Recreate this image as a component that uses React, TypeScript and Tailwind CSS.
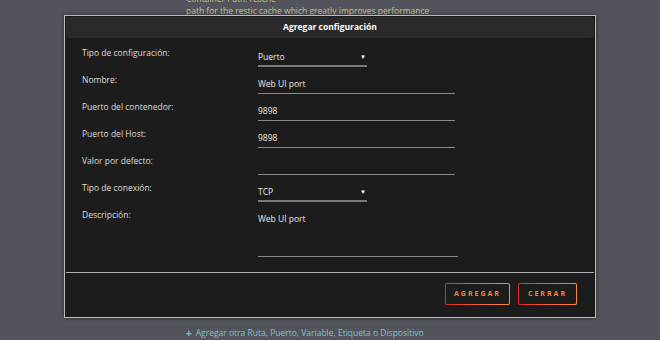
import React from 'react';

const font = { fontFamily: '"Open Sans", "Liberation Sans", Arial, sans-serif' };

const Label: React.FC<{ text: string }> = ({ text }) => (
  <div className="w-[176px] shrink-0 leading-[12px] text-[#dcdcdc]">{text}</div>
);

const TextInput: React.FC<{ value?: string; wide?: boolean }> = ({ value, wide }) => (
  <div
    className={`${wide ? 'w-[200px]' : 'w-[197px]'} pt-[4px] pb-[2px] h-[20px] leading-[12px] text-[#e8e8e8] border-b border-[#8a8a8a]`}
  >
    {value}
  </div>
);

const Select: React.FC<{ value: string }> = ({ value }) => (
  <div className="w-[109px] pt-[4px] pb-[2px] h-[20px] leading-[12px] text-[#e8e8e8] border-b-2 border-[#7a7a7a] flex justify-between pr-[1px]">
    <span>{value}</span>
    <span className="text-[6px] leading-[12px] text-white">▼</span>
  </div>
);

const Row: React.FC<{ label: string; children: React.ReactNode }> = ({ label, children }) => (
  <div className="flex h-[27px]">
    <Label text={label} />
    <div>{children}</div>
  </div>
);

const GradientButton: React.FC<{ text: string; width: string }> = ({ text, width }) => (
  <div className={`${width} h-[22px] p-[1px] rounded-[2px] bg-gradient-to-r from-[#e2262b] to-[#ff8c2f]`}>
    <div className="w-full h-full bg-[#1c1c1c] rounded-[1px] flex items-center justify-center text-[7px] font-bold tracking-[2px] text-[#f5842c]">
      {text}
    </div>
  </div>
);

export default function App() {
  return (
    <div className="relative w-[660px] h-[340px] overflow-hidden bg-[#53535b] text-[8.5px]" style={font}>
      {/* page behind the dialog */}
      <div className="flex flex-col h-full pl-[186px]">
        <div className="mt-[-7px] leading-[12px] text-[#c4c48a]">Container Path: /cache</div>
        <div className="leading-[12px] text-[#c4c48a]">path for the restic cache which greatly improves performance</div>
        <div className="mt-auto mb-[1px] leading-[12px] text-[#79c3d3] flex items-center gap-[4px]">
          <span className="font-bold text-[10px]">+</span>
          <span>Agregar otra Ruta, Puerto, Variable, Etiqueta o Dispositivo</span>
        </div>
      </div>

      {/* dialog */}
      <div className="absolute left-[64px] top-[15px] w-[532px] h-[303px] border border-[#bcbcbc] bg-[#1c1c1c] flex flex-col shadow-[0_0_4px_rgba(0,0,0,0.5)]">
        <div className="mx-[1px] mt-[1px] h-[21px] rounded-[3px] bg-[#2a2a2a] flex items-center justify-center text-white font-bold">
          Agregar configuración
        </div>
        <div className="flex-1 pl-[17px] pt-[9px]">
          <Row label="Tipo de configuración:">
            <Select value="Puerto" />
          </Row>
          <Row label="Nombre:">
            <TextInput value="Web UI port" />
          </Row>
          <Row label="Puerto del contenedor:">
            <TextInput value="9898" />
          </Row>
          <Row label="Puerto del Host:">
            <TextInput value="9898" />
          </Row>
          <Row label="Valor por defecto:">
            <TextInput />
          </Row>
          <Row label="Tipo de conexión:">
            <Select value="TCP" />
          </Row>
          <div className="flex">
            <Label text="Descripción:" />
            <div className="w-[200px] h-[48px] pt-[4px] leading-[12px] text-[#e8e8e8] border-b border-[#8a8a8a]">
              Web UI port
            </div>
          </div>
        </div>
        <div className="mx-[1px] h-[45px] border-t border-[#b0b0b0] flex items-start justify-end gap-[8px] pt-[10px] pr-[17px]">
          <GradientButton text="AGREGAR" width="w-[65px]" />
          <GradientButton text="CERRAR" width="w-[59px]" />
        </div>
      </div>
    </div>
  );
}
